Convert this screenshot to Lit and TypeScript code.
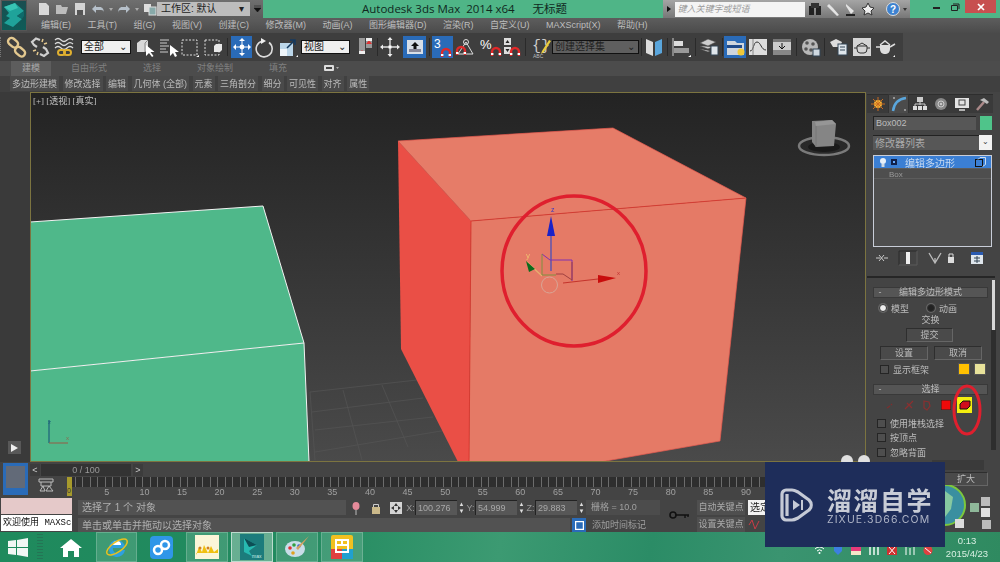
import { LitElement, css, html, svg, SVGTemplateResult } from 'lit';
import { customElement } from 'lit/decorators.js';

const box = (w: number, h: number, inner: SVGTemplateResult) =>
  html`<svg width=${w} height=${h} viewBox="0 0 ${w} ${h}">${inner}</svg>`;

const magnet = svg`<path d="M10 21v-4a4 4 0 0 1 8 0v4" fill="none" stroke="#e02828" stroke-width="2.4"/><path d="M9 19h2.4M16.6 19h2.4" stroke="#fff" stroke-width="2"/>`;

const ICONS: Record<string, SVGTemplateResult> = {
  link: svg`<g fill="none" stroke="#e3c88f" stroke-width="2.4"><rect x="3" y="3" width="11" height="7" rx="3.5" transform="rotate(40 8 6)"/><rect x="10" y="12" width="11" height="7" rx="3.5" transform="rotate(40 15 15)"/></g>`,
  unlink: svg`<g fill="none" stroke="#cfcfcf" stroke-width="2.2"><path d="M11 4 7 2.500 3 6l2 3 3 2"/><path d="M11 18l4 2 4-3-2-4-3-2"/></g><path d="M14 3l-1 3M18 7l-3 1M4 15l3-1M8 19l1-3" stroke="#e3c88f" stroke-width="1.500"/>`,
  bind: svg`<path d="M2 4q3-3 6 0t6 0 6 0M2 8q3-3 6 0t6 0 6 0M2 12q3-3 6 0t6 0 6 0" fill="none" stroke="#ddd" stroke-width="1.200"/><g fill="none" stroke="#e0b030" stroke-width="2"><rect x="5" y="14" width="7" height="5" rx="2.500"/><rect x="11" y="14" width="7" height="5" rx="2.500"/></g>`,
  selObj: svg`<path d="M3 7l4-3h7v9l-3 3H3z" fill="#d8d8d8"/><path d="M11 16V7l3-3" fill="none" stroke="#888"/><path d="M12 9v11l3-3 3 4 1.500-1-3-4h4z" fill="#fff"/>`,
  selName: svg`<path d="M3 4h9M3 7h7M3 10h9M3 13h6M3 16h8" stroke="#ccc" stroke-width="1.200"/><path d="M13 9v11l3-3 2 4 2-1-2-4h4z" fill="#fff"/>`,
  rect: svg`<rect x="3" y="4" width="15" height="15" fill="none" stroke="#ddd" stroke-dasharray="2 1.500"/><path d="M17 21l3-2v2z" fill="#fff"/>`,
  win: svg`<rect x="3" y="4" width="14" height="15" fill="none" stroke="#ddd" stroke-dasharray="2 1.500"/><path d="M12 10l2-2h6v6l-2 2h-6z" fill="#e8e8e8"/>`,
  move: svg`<g fill="#fff"><path d="M11 2l3 3h-6zM11 20l3-3H8zM2 11l3-3v6zM20 11l-3-3v6z"/><circle cx="11" cy="11" r="2.400"/></g><path d="M11 5v12M5 11h12" stroke="#fff"/>`,
  rotate: svg`<path d="M16 6.500a8 8 0 1 1-7-1.300" fill="none" stroke="#ddd" stroke-width="1.600"/><path d="M8 2l5 3-5 3z" fill="#eee"/>`,
  scale: svg`<path d="M3 7h13v13H3z" fill="#bcd7ea"/><rect x="3" y="13" width="7" height="7" fill="#eef5fa"/><path d="M10 12l7-7M13 4h5v5" fill="none" stroke="#143a60" stroke-width="1.500"/><path d="M19 21l2-2v2z" fill="#fff"/>`,
  pivot: svg`<rect x="5" y="2" width="6" height="16" fill="#999"/><rect x="12" y="2" width="6" height="10" fill="#999"/><path d="M5 18h6l-3-4zM12 8h6l-3-4z" fill="#d33"/><rect x="5" y="15" width="6" height="3" fill="#eee"/><rect x="12" y="2" width="6" height="3" fill="#eee"/>`,
  axes: svg`<path d="M11 3v16M3 11h16" stroke="#ddd" stroke-width="1.400"/><path d="M11 1l2.500 3h-5zM11 21l2.500-3h-5zM1 11l3-2.500v5zM21 11l-3-2.500v5z" fill="#eee"/><rect x="9.500" y="9.500" width="3" height="3" fill="#fff"/>`,
  manip: svg`<rect x="3" y="4" width="16" height="14" fill="#d8dfe8"/><rect x="5" y="13" width="12" height="3" fill="#889"/><path d="M11 6l4 4h-2.500v3h-3v-3H7z" fill="#111"/>`,
  snap: svg`<text x="2" y="12" fill="#fff" font-size="12" font-family="Liberation Sans">3</text>${magnet}`,
  angle: svg`<path d="M4 18l8-12 7 12z" fill="none" stroke="#ddd"/><circle cx="12" cy="6" r="2.500" fill="none" stroke="#ddd"/><g transform="translate(-7 -2)">${magnet}</g>`,
  pct: svg`<text x="0" y="13" fill="#fff" font-size="13" font-family="Liberation Sans">%</text><g transform="translate(2 -1)">${magnet}</g>`,
  spin: svg`<rect x="3" y="2" width="7" height="7" fill="#ddd"/><rect x="3" y="11" width="7" height="7" fill="#ddd"/><path d="M4.500 7l2-3 2 3zM4.500 13l2 3 2-3z" fill="#222"/><g transform="translate(0 -1)">${magnet}</g>`,
  named: svg`<text x="2" y="14" fill="#ccc" font-size="15" font-family="Liberation Mono">{}</text><path d="M12 15l7-11 2 1-7 11-3 2z" fill="#e8cc3c"/><text x="3" y="22" fill="#bbb" font-size="5" font-family="Liberation Sans">ABC</text>`,
  mirror: svg`<path d="M3 3l7 3v14l-7-3z" fill="#ddd"/><path d="M19 3l-7 3v14l7-3z" fill="#5aa6dc"/>`,
  align: svg`<path d="M3 2v18" stroke="#ccc"/><rect x="4" y="5" width="9" height="5" fill="#ddd"/><rect x="4" y="12" width="15" height="5" fill="#999"/><path d="M18 21l3-2v2z" fill="#fff"/>`,
  layer: svg`<path d="M2 7l8-4 8 3-8 4zM2 10l8 3 4-2M2 13l8 3 2-1" fill="#ccc" stroke="#444" stroke-width=".6"/><rect x="13" y="10" width="7" height="9" fill="#dfe6ec" stroke="#345"/>`,
  ribbon: svg`<path d="M3 5h8l2 2h7v12H3z" fill="#cfd6de"/><rect x="3" y="9" width="15" height="3" fill="#1f4a8a"/><circle cx="17" cy="16" r="3.500" fill="#f0c838"/>`,
  curve: svg`<rect x="2" y="3" width="18" height="16" fill="#ddd"/><path d="M3 15c4 0 3-9 7-9s4 8 9 8" fill="none" stroke="#333"/><path d="M6 3v16" stroke="#888"/>`,
  schem: svg`<rect x="2" y="3" width="18" height="16" fill="#ccc"/><rect x="2" y="3" width="18" height="3" fill="#777"/><rect x="2" y="14" width="18" height="5" fill="#888"/><path d="M11 7v5M8 10l3 3 3-3" stroke="#111" fill="none"/>`,
  mat: svg`<circle cx="10" cy="11" r="8" fill="#b8b8b8"/><g fill="#555"><circle cx="7" cy="7" r="1.800"/><circle cx="13" cy="8" r="1.800"/><circle cx="6" cy="13" r="1.800"/><circle cx="11" cy="14" r="1.800"/></g><rect x="13" y="13" width="7" height="7" fill="#cfd8e0" stroke="#345"/>`,
  rsetup: svg`<path d="M3 6l6-3 6 3-2 5H6z" fill="#ddd"/><rect x="11" y="8" width="9" height="11" fill="#dfe6ec" stroke="#345"/><path d="M13 11h5M13 14h5" stroke="#345"/>`,
  frame: svg`<rect x="2" y="2" width="18" height="18" fill="#d5d5d5"/><path d="M6 10h10v3a3 4 0 0 1-3 4H9a3 4 0 0 1-3-4z" fill="none" stroke="#333"/><path d="M6 10l5-3 5 3M16 12h3M6 12H3" fill="none" stroke="#333"/>`,
  teapot: svg`<path d="M6 9h10v4a4 5 0 0 1-4 5h-2a4 5 0 0 1-4-5z" fill="#ddd"/><path d="M6 9l5-4 5 4M16 11l5-3M6 11H2" fill="none" stroke="#ddd" stroke-width="1.500"/><path d="M19 21l2-2v2z" fill="#fff"/>`,
};

// width in px, then what sits in the slot
type Tool = [number, string, string?];
const TOOLS: Tool[] = [
  [24, 'link'], [24, 'unlink'], [24, 'bind'], [5, ''], [50, 'combo', '全部'], [2, ''],
  [24, 'selObj'], [22, 'selName'], [22, 'rect'], [23, 'win'], [7, 'sep'],
  [21, 'move', 'on'], [24, 'rotate'], [23, 'scale'], [2, ''], [49, 'combo', '视图'], [4, ''],
  [22, 'pivot'], [3, 'sep'], [22, 'axes'], [2, ''], [23, 'manip', 'on'], [6, 'sep'],
  [21, 'snap', 'on'], [1, ''], [22, 'angle'], [4, ''], [21, 'pct'], [22, 'spin'], [4, 'sep'], [3, ''], [22, 'named'],
  [87, 'combo', '创建选择集'], [4, 'sep'], [22, 'mirror'], [4, 'sep'], [24, 'align'], [4, 'sep'], [23, 'layer'], [4, 'sep'],
  [22, 'ribbon', 'on'], [1, ''], [22, 'curve'], [2, ''], [22, 'schem'], [7, 'sep'], [22, 'mat'], [5, 'sep'], [22, 'rsetup'], [2, ''], [22, 'frame'], [1, ''], [22, 'teapot'],
];

const MENUS = ['编辑(E)', '工具(T)', '组(G)', '视图(V)', '创建(C)', '修改器(M)', '动画(A)', '图形编辑器(D)', '渲染(R)', '自定义(U)', 'MAXScript(X)', '帮助(H)'];
const RIBBON_TABS = ['自由形式', '选择', '对象绘制', '填充'];
const RIBBON_SUBS = ['多边形建模', '修改选择', '编辑', '几何体 (全部)', '元素', '三角剖分', '细分', '可见性', '对齐', '属性'];
const FRAMES = Array.from({ length: 20 }, (_, i) => (i + 1) * 5);

@customElement('app-root')
export class AppRoot extends LitElement {
  static styles = css`
    :host {
      display: block;
      width: 1000px;
      height: 562px;
      overflow: hidden;
      position: relative;
      background: #444;
      font-family: 'Liberation Sans', 'Noto Sans CJK SC', sans-serif;
      font-size: 9px;
      color: #bdbdbd;
    }
    .shell { width: 1000px; height: 562px; filter: blur(0.35px); position: relative; overflow: hidden; }
    svg { display: block; flex: none; }

    .title { height: 18px; display: flex; background: #4fb587; color: #10281e; }
    .quick { width: 263px; padding-left: 37px; box-sizing: border-box; display: flex; align-items: center; background: linear-gradient(#6f6f6f, #5c5c5c); gap: 4px; }
    .workspace { width: 93px; height: 14px; margin-left: -4px; padding-left: 4px; box-sizing: border-box; background: #bdbdbd; color: #222; font-size: 10px; line-height: 14px; display: flex; justify-content: space-between; padding-right: 6px; }
    .caption { flex: 1; padding-left: 99px; font-size: 11.5px; line-height: 18px; white-space: pre; font-family: 'Open Sans', 'Noto Sans CJK SC', sans-serif; }
    .search { width: 247px; display: flex; align-items: center; background: linear-gradient(#a5a5a5, #777); gap: 3.5px; padding-left: 4px; box-sizing: border-box; }
    .search-box { width: 130px; height: 15px; background: #f4f4f4; color: #9a9a9a; line-height: 15px; padding-left: 3px; box-sizing: border-box; font-style: italic; }
    .search .gap { width: 4px; }
    .winbtns { width: 90px; display: flex; align-items: flex-start; padding-left: 17px; box-sizing: border-box; }
    .winbtn { width: 19px; height: 13px; display: flex; align-items: center; justify-content: center; }
    .close { width: 31px; background: #c75050; color: #fff; }

    .menu { height: 15px; padding-left: 41px; display: flex; gap: 16.5px; font-size: 9px; line-height: 15px; background: linear-gradient(#5d5d5d, #4b4b4b); color: #bdbdbd; white-space: nowrap; }

    .toolbar { height: 28px; display: flex; background: #4a4a4a; }
    .tools { width: 903px; box-sizing: border-box; display: flex; align-items: center; background: #3e3e3e; }
    .slot { height: 22px; flex: none; display: flex; align-items: center; justify-content: center; }
    .slot.on { background: #2a6bb8; }
    .combo { height: 14px; width: 100%; box-sizing: border-box; border: 1px solid #111; background: #efefef; color: #222; font-size: 10px; line-height: 12px; padding-left: 2px; display: flex; justify-content: space-between; padding-right: 3px; }
    .combo.dark { background: #5f5f5f; color: #222; }
    .vsep { width: 1px; height: 18px; background: #2a2a2a; }
    .grip { width: 3px; height: 20px; margin-right: 1px; border-left: 1px dotted #777; flex: none; box-sizing: border-box; }

    .rtabs { height: 15px; display: flex; background: #4c4c4c; padding-left: 11px; color: #808080; line-height: 15px; font-size: 9px; }
    .rtab { padding: 0 18px; }
    .rtab.active { background: #5d5d5d; color: #a8a8a8; padding: 0 11px; margin-right: 2px; }
    .rsubs { height: 16px; display: flex; padding-left: 10px; background: #404040; line-height: 16px; color: #bbb; }
    .rsub { padding: 0 2px; margin-right: 3.5px; white-space: nowrap; background: #4a4a4a; height: 15px; }

    .body { height: 405px; display: flex; }
    .center { width: 866px; flex: none; }
    .viewrow { height: 370px; display: flex; }
    .strip { width: 30px; flex: none; background: #3a3a3a; display: flex; align-items: flex-end; padding: 0 0 8px 8px; box-sizing: border-box; }
    .play { width: 13px; height: 13px; background: #585858; display: flex; align-items: center; justify-content: center; }
    .viewport { width: 836px; position: relative; background: linear-gradient(#232323, #4a4a4a); outline: 1px solid #7c7440; outline-offset: -1px; overflow: hidden; }
    .vlabel { position: absolute; left: 3px; top: 2px; font-size: 9px; color: #c4c4c4; font-family: 'Liberation Serif', 'Noto Sans CJK SC', serif; }

    .timeline { height: 35px; display: flex; background: #444; }
    .tl-left { width: 30px; flex: none; padding: 1px 0 0 3px; box-sizing: border-box; }
    .keybtn { width: 25px; height: 32px; background: #2a6bb8; padding: 3px; box-sizing: border-box; }
    .keybtn div { height: 22px; background: #626a78; }
    .tl-right { flex: 1; min-width: 0; }
    .slider { height: 15px; display: flex; align-items: center; }
    .arrow { width: 10px; height: 12px; background: #3c3c3c; line-height: 12px; text-align: center; color: #ccc; }
    .sliderbar { width: 90px; height: 12px; margin: 0 2px 0 1px; background: #333; text-align: center; line-height: 12px; color: #999; }
    .ruler { display: flex; height: 20px; }
    .rule-gap { width: 37px; flex: none; display: flex; justify-content: flex-end; padding-right: 13px; box-sizing: border-box; }
    .rule-main { flex: 1; min-width: 0; overflow: hidden; position: relative; }
    .ticks { height: 10px; background: repeating-linear-gradient(90deg, #6c6c6c 0 1px, #2e2e2e 1px 7.52px); }
    .nums { display: flex; padding-left: 21px; height: 10px; line-height: 10px; color: #a0a0a0; }
    .nums span { width: 37.6px; flex: none; text-align: center; }
    .marker { position: absolute; left: 0; top: 0; width: 5px; height: 19px; background: #a79a2c; color: #333; font-size: 7px; line-height: 28px; }

    .panel { width: 134px; flex: none; box-sizing: border-box; position: relative; background: #444; padding-left: 1px; }
    .ptabs { display: flex; margin-top: 2px; height: 19px; }
    .ptab { width: 21px; background: #3a3a3a; display: flex; align-items: center; justify-content: center; box-sizing: border-box; border-top: 1px solid #2e2e2e; }
    .ptab.active { background: #4b4b4b; border: 1px solid #333; border-bottom: none; }
    .pbody { padding-left: 6px; width: 119px; }
    .namerow { display: flex; margin-top: 3px; height: 14px; gap: 4px; }
    .nameinput { width: 106px; background: #575757; box-sizing: border-box; padding-left: 2px; border-top: 1px solid #222; border-left: 1px solid #222; line-height: 13px; }
    .swatch { width: 12px; background: #4fc48a; }
    .modrow { display: flex; margin-top: 5px; height: 15px; width: 119px; }
    .modinput { flex: 1; background: #575757; border-top: 1px solid #222; line-height: 15px; font-size: 10px; padding-left: 2px; color: #aaa; }
    .moddrop { width: 13px; background: #f2f2f2; color: #444; text-align: center; line-height: 14px; font-size: 8px; }
    .stack { margin-top: 5px; height: 92px; width: 119px; box-sizing: border-box; border: 1px solid #c8cdd8; background: #4e4e4e; }
    .stack-on { height: 12px; background: #3b7fd4; display: flex; align-items: center; gap: 4px; padding-left: 5px; color: #c8daf0; font-size: 10px; }
    .stack-on .sp { flex: 1; }
    .stack-on .end { width: 1px; }
    .stack-on .name { margin-left: 4px; }
    .stack-box { height: 11px; padding-left: 15px; line-height: 11px; color: #9a9a9a; border-bottom: 1px solid #5c5c5c; border-top: 1px solid #5c5c5c; font-size: 8px; box-sizing: border-box; }
    .stackbtns { margin-top: 3px; height: 16px; display: grid; grid-template-columns: 23px 29px 19px 24px 14px; align-items: center; padding-left: 2px; }
    .divider { margin-top: 10px; height: 2px; background: #262626; width: 128px; margin-left: -6px; }
    .rhead { margin-top: 9px; height: 11px; width: 115px; box-sizing: border-box; background: #555; border: 1px solid #393939; line-height: 9px; display: flex; color: #bbb; }
    .rhead b { width: 12px; text-align: center; font-weight: normal; }
    .rhead span { flex: 1; text-align: center; padding-right: 12px; }
    .radios { margin-top: 5px; height: 10px; display: flex; gap: 18px; padding-left: 6px; }
    .radio { display: flex; align-items: center; gap: 4px; }
    .dot { width: 6px; height: 6px; border-radius: 50%; background: #222; border: 1px solid #333; box-shadow: 0 0 0 1px #666; }
    .dot.on { background: #eee; }
    .center-text { margin-top: 2px; height: 10px; text-align: center; width: 115px; line-height: 10px; font-size: 9px; }
    .btn { height: 14px; box-sizing: border-box; border-top: 1px solid #2e2e2e; border-left: 1px solid #2e2e2e; border-bottom: 1px solid #666; border-right: 1px solid #666; background: #4a4a4a; text-align: center; line-height: 12px; }
    .commit { width: 47px; margin: 3px 0 0 33px; }
    .twobtn { display: flex; margin-top: 4px; gap: 6px; padding-left: 7px; }
    .twobtn .btn { width: 48px; }
    .framerow { display: flex; margin-top: 3px; height: 12px; align-items: center; padding-left: 7px; }
    .framerow .sp { flex: 1; }
    .check { width: 7px; height: 7px; background: #4e4e4e; border: 1px solid #252525; margin-right: 4px; flex: none; }
    .c1 { width: 12px; height: 12px; background: #ffc000; border: 1px solid #555; box-sizing: border-box; margin-left: 4px; }
    .c2 { width: 12px; height: 12px; background: #e8e29a; border: 1px solid #555; box-sizing: border-box; margin: 0 6px 0 4px; }
    .levels { margin-top: 2px; height: 16px; display: flex; align-items: center; padding-left: 12px; gap: 6px; }
    .levels .red { margin-left: 2px; }
    .checks { display: flex; flex-direction: column; gap: 2.5px; margin-top: 4px; padding-left: 4px; }
    .checks div { height: 12px; display: flex; align-items: center; }
    .spinrow { margin-top: 2px; height: 10px; display: flex; justify-content: flex-end; padding-right: 8px; }
    .spinfield { width: 52px; background: #3a3a3a; }
    .grow { margin: 2px 0 0 71px; width: 44px; }
    .scroll { position: absolute; right: 5px; top: 188px; width: 3px; height: 50px; background: #d8d8d8; }
    .scrolltrack { position: absolute; right: 4px; top: 238px; width: 5px; height: 120px; background: #2e2e2e; }

    .status { height: 35px; display: flex; background: #444; }
    .msg { width: 72px; flex: none; padding: 1px 0 0 1px; box-sizing: border-box; }
    .msg-top { height: 16px; background: #e5c9c9; }
    .msg-bot { height: 16px; margin-top: 1px; background: #fff; color: #111; font: 9px 'Liberation Mono', 'Noto Sans CJK SC', monospace; line-height: 16px; white-space: nowrap; padding-left: 2px; }
    .stat-main { width: 584px; margin-left: 6px; flex: none; }
    .stat-row { display: flex; align-items: center; height: 15px; margin-top: 3px; }
    .stat-row + .stat-row { margin-top: 3px; height: 14px; }
    .field { background: #525252; height: 100%; box-sizing: border-box; padding-left: 4px; line-height: 15px; font-size: 10px; color: #b0b0b0; }
    .f1 { width: 268px; }
    .f2 { width: 492px; }
    .ico { width: 20px; display: flex; justify-content: center; flex: none; }
    .xyz { width: 9px; color: #9a9a9a; flex: none; text-align: center; }
    .coord { width: 42px; height: 15px; flex: none; background: #575757; border-left: 1px solid #222; border-top: 1px solid #222; box-sizing: border-box; line-height: 14px; padding-left: 2px; color: #a8a8a8; }
    .updown { width: 9px; color: #ddd; flex: none; text-align: center; font-size: 6px; line-height: 7px; }
    .gridlbl { width: 74px; height: 15px; flex: none; background: #4c4c4c; padding-left: 5px; box-sizing: border-box; line-height: 15px; color: #a0a0a0; }
    .mark { height: 14px; width: 74px; line-height: 14px; padding-left: 4px; box-sizing: border-box; color: #a0a0a0; flex: none; margin-left: 2px; }
    .markbtn { width: 14px; height: 14px; background: #2a6bb8; margin-left: 2px; flex: none; display: flex; justify-content: center; align-items: center; }
    .key { width: 35px; flex: none; display: flex; align-items: center; justify-content: center; }
    .autokey { width: 48px; flex: none; padding-top: 3px; }
    .autokey div { height: 15px; line-height: 15px; text-align: center; background: #4f4f4f; color: #aaa; margin-bottom: 2px; }
    .sel { padding: 3px 0 0 3px; }
    .sel div { width: 30px; height: 15px; background: #f2f2f2; color: #222; font-size: 10px; line-height: 15px; margin-bottom: 3px; padding-left: 2px; box-sizing: border-box; }

    .taskbar { height: 30px; display: flex; align-items: center; background: linear-gradient(100deg, #1f8a5d 0%, #228a5f 30%, #3c9a72 50%, #2b8c66 65%, #3a9470 78%, #2f8a60 100%); color: #d8efe2; }
    .winlogo { width: 37px; padding-left: 8px; flex: none; box-sizing: border-box; }
    .tgrip { width: 6px; height: 26px; margin-right: 10px; flex: none; background: repeating-linear-gradient(#247555 0 1px, transparent 1px 3px); }
    .task { height: 30px; display: flex; align-items: center; justify-content: center; flex: none; box-sizing: border-box; }
    .task.run { background: rgba(255,255,255,.14); border: 1px solid rgba(255,255,255,.2); }
    .task.cur { background: rgba(255,255,255,.32); border: 1px solid rgba(255,255,255,.55); }
    .tray { margin-left: auto; display: flex; gap: 8px; padding-top: 6px; align-self: center; }
    .clock { width: 52px; text-align: center; font-size: 9.500px; line-height: 13px; margin: 0 7px 0 8px; flex: none; }

    .logo { position: absolute; left: 1px; top: 0; width: 26px; height: 31px; background: linear-gradient(#1a4e50, #0e5c58); border: 1px solid #555; box-sizing: border-box; }
    .annot { position: absolute; left: 0; top: 0; pointer-events: none; }
    .nav { position: absolute; left: 925px; top: 485px; }
    .mark-wm { position: absolute; left: 765px; top: 462px; width: 180px; height: 85px; background: #1e2d5a; display: flex; align-items: center; padding-left: 15px; box-sizing: border-box; gap: 13px; color: #c8ccd6; }
    .wm-cn { font-size: 25px; font-weight: 700; letter-spacing: 1.500px; line-height: 30px; white-space: nowrap; font-family: 'Noto Sans CJK SC', sans-serif; }
    .wm-en { font-size: 10.500px; letter-spacing: 1.100px; line-height: 12px; white-space: nowrap; font-family: 'Inter', sans-serif; color: #aeb4c6; }
  `;

  private renderTool(t: Tool) {
    const [w, id, arg] = t;
    let inner: unknown = '';
    if (id === 'combo') {
      inner = html`<div class="combo ${arg === '创建选择集' ? 'dark' : ''}"><span>${arg}</span><span>⌄</span></div>`;
    } else if (id === 'sep') {
      inner = html`<div class="vsep"></div>`;
    } else if (id) {
      inner = box(22, 22, ICONS[id]);
    }
    return html`<div class="slot ${arg === 'on' ? 'on' : ''}" style="width:${w}px">${inner}</div>`;
  }

  private renderViewport() {
    const floorLines = [
      'M310 392L417 380', 'M312 412L423 398', 'M315 430L433 417', 'M315 452L447 430',
      'M343 390L362 460', 'M382 385L408 447', 'M310 392L315 460',
    ];
    return html`<svg width="836" height="370" viewBox="30 92 836 370">
      <g stroke="#545454" stroke-width=".7" fill="none">
        ${floorLines.map((d) => svg`<path d=${d}/>`)}
      </g>

      <path d="M30 222L263 206L304 343L30 371z" fill="#4fb88a"/>
      <path d="M30 371L304 343L309 462H30z" fill="#4fb88a"/>
      <path d="M30 222L263 206L304 343L309 462M30 371L304 343" fill="none" stroke="#f2f2f2" stroke-width="1"/>
      <g stroke="#1d5f7a" fill="none" stroke-width="1.200">
        <path d="M49 443V420"/><path d="M49 443H68" stroke="#8a6a50"/>
      </g>
      <text x="48" y="424" font-size="6" fill="#1d5f7a" font-family="Liberation Sans">z</text>
      <text x="66" y="440" font-size="6" fill="#8a6a50" font-family="Liberation Sans">x</text>

      <path d="M398 141L471 221L469 462H458L401 349z" fill="#ea4f46"/>
      <path d="M398 141L613 128L746 198L471 221z" fill="#e67c68"/>
      <path d="M471 221L746 198L720 441L600 462H469z" fill="#e57a66"/>
      <path d="M471 221L746 198M471 221L469 462" fill="none" stroke="#d8382f" stroke-width=".9"/>
      <path d="M398 141L613 128L746 198L720 441L600 462M398 141L471 221" fill="none" stroke="#e65a50" stroke-width=".7"/>

      <circle cx="549.500" cy="285" r="8" fill="none" stroke="#d9a595" stroke-width="1"/>
      <path d="M551 271V235" stroke="#3b4cc0" stroke-width="1.200"/>
      <path d="M551 216L555 236H547z" fill="#1a22c8"/>
      <path d="M542 276L527 262" stroke="#e8b070" stroke-width="1.200"/>
      <path d="M526 261L535 269L529 272z" fill="#0c6a1e"/>
      <path d="M563 283L598 279" stroke="#c4342c" stroke-width="1.200"/>
      <path d="M616 278L598 275V283z" fill="#c80c0c"/>
      <path d="M542 254L550 260H572V281" fill="none" stroke="#8030b0" stroke-width="1"/>
      <path d="M572 262V280L563 274H556" fill="none" stroke="#a04040" stroke-width="1"/>
      <path d="M542 254V275H556" fill="none" stroke="#7e9040" stroke-width="1"/>
      <text x="551" y="212" font-size="7" fill="#3b3bc0" font-family="Liberation Sans">z</text>
      <text x="526" y="258" font-size="8" fill="#f0c070" font-family="Liberation Sans">y</text>
      <text x="617" y="275" font-size="6" fill="#c03030" font-family="Liberation Sans">x</text>

      <ellipse cx="824" cy="146" rx="25" ry="9" fill="none" stroke="#7a7a7a" stroke-width="2.500"/>
      <ellipse cx="824" cy="147" rx="16" ry="5" fill="#1a1a1a"/>
      <path d="M812 121L832 120L836 124L834 146L816 147L812 142z" fill="#858585"/>
      <path d="M815 122L832 120L836 124L816 126z" fill="#969696"/>
      <path d="M816 126V147" stroke="#777"/>
    </svg>`;
  }

  private renderPanel() {
    return html`<div class="panel">
      <div class="ptabs">
        <div class="ptab">${box(16, 16, svg`<circle cx="8" cy="8" r="4" fill="#f5b838"/><path d="M8 1v14M1 8h14M3 3l10 10M13 3L3 13" stroke="#c86a20"/>`)}</div>
        <div class="ptab active">${box(16, 16, svg`<path d="M2 15C3 7 7 3 15 2" fill="none" stroke="#5aa6dc" stroke-width="2.500"/><path d="M2 2h2M13 14h2" stroke="#ddd"/>`)}</div>
        <div class="ptab">${box(16, 16, svg`<rect x="5" y="1" width="6" height="5" fill="#ccc"/><path d="M8 6v3M3 10V8h10v2" stroke="#ccc" fill="none"/><rect x="1" y="10" width="4" height="4" fill="#ddd"/><rect x="6" y="10" width="4" height="4" fill="#ddd"/><rect x="11" y="10" width="4" height="4" fill="#ddd"/>`)}</div>
        <div class="ptab">${box(16, 16, svg`<circle cx="8" cy="8" r="6" fill="#888"/><circle cx="8" cy="8" r="3" fill="none" stroke="#ccc"/><circle cx="8" cy="8" r="1" fill="#ddd"/>`)}</div>
        <div class="ptab">${box(16, 16, svg`<rect x="1" y="2" width="14" height="10" fill="#e4e4e4"/><rect x="5" y="4" width="6" height="5" fill="none" stroke="#444"/><path d="M5 14h6" stroke="#ddd" stroke-width="1.500"/>`)}</div>
        <div class="ptab">${box(16, 16, svg`<path d="M2 14L9 6" stroke="#a88" stroke-width="2.500"/><path d="M5 4l4-2 5 4-2 2-3-2z" fill="#bbb"/>`)}</div>
      </div>
      <div class="pbody">
        <div class="namerow"><div class="nameinput">Box002</div><div class="swatch"></div></div>
        <div class="modrow"><div class="modinput">修改器列表</div><div class="moddrop">⌄</div></div>
        <div class="stack">
          <div class="stack-on">
            ${box(8, 11, svg`<circle cx="4" cy="4" r="3" fill="#e8f0f8"/><rect x="2.500" y="7" width="3" height="3" fill="#d0d8e0"/>`)}
            ${box(6, 6, svg`<rect width="6" height="6" fill="#10204a"/><rect x="2" y="2" width="2" height="2" fill="#6af"/>`)}
            <span class="name">编辑多边形</span><span class="sp"></span>
            ${box(11, 10, svg`<rect x=".5" y="2.500" width="7" height="7" fill="none" stroke="#111"/><path d="M3 2.500L5 .5h5.500v7L7.500 9.500" fill="none" stroke="#cde"/>`)}
            <span class="end"></span>
          </div>
          <div class="stack-box">Box</div>
        </div>
        <div class="stackbtns">
          ${box(14, 12, svg`<path d="M1 6h4M9 6h4M4 3l5 6M9 3L4 9" stroke="#ccc"/>`)}
          ${box(20, 16, svg`<path d="M1 15V1h18" fill="none" stroke="#2a2a2a"/><path d="M19 1v14H1" fill="none" stroke="#5a5a5a"/><rect x="8" y="2" width="4" height="12" fill="#eee"/>`)}
          ${box(16, 14, svg`<path d="M2 2l6 10 6-10M8 12V7" fill="none" stroke="#bbb" stroke-width="1.300"/>`)}
          ${box(10, 14, svg`<rect x="2" y="6" width="6" height="6" fill="#ddd"/><path d="M3 6V3h4v3" fill="none" stroke="#ddd"/>`)}
          ${box(14, 14, svg`<rect x="1" y="1" width="12" height="12" fill="#dfe6ec"/><rect x="1" y="1" width="12" height="3" fill="#2a5ab0"/><path d="M4 7h6M4 10h6M7 5v7" stroke="#345"/>`)}
        </div>
        <div class="divider"></div>

        <div class="rhead"><b>-</b><span>编辑多边形模式</span></div>
        <div class="radios">
          <div class="radio"><i class="dot on"></i>模型</div>
          <div class="radio"><i class="dot"></i>动画</div>
        </div>
        <div class="center-text">交换</div>
        <div class="btn commit">提交</div>
        <div class="twobtn"><div class="btn">设置</div><div class="btn">取消</div></div>
        <div class="framerow"><i class="check"></i>显示框架<span class="sp"></span><i class="c1"></i><i class="c2"></i></div>

        <div class="rhead"><b>-</b><span>选择</span></div>
        <div class="levels">
          ${box(12, 12, svg`<path d="M2 9l3-2M6 5l1 1" stroke="#7e2e2e" stroke-width="1.300"/>`)}
          ${box(12, 12, svg`<path d="M2 10l8-8M4 4l5 5" stroke="#8a3030" stroke-width="1.300"/>`)}
          ${box(12, 12, svg`<path d="M3 2l5 1 1 4-3 4-3-2z" fill="none" stroke="#8a3030" stroke-width="1.200"/>`)}
          <div class="red">${box(10, 10, svg`<rect width="10" height="10" fill="#ee0a0a" stroke="#222"/>`)}</div>
          ${box(15, 16, svg`<rect width="15" height="16" fill="#f4ee10"/><path d="M3 7l3-3h7v5l-3 3H3z" fill="#d00c1c" stroke="#111"/>`)}
        </div>
        <div class="checks">
          <div><i class="check"></i>使用堆栈选择</div>
          <div><i class="check"></i>按顶点</div>
          <div><i class="check"></i>忽略背面</div>
        </div>
        <div class="spinrow"><div class="spinfield"></div></div>
        <div class="btn grow">扩大</div>
      </div>
      <div class="scroll"></div>
      <div class="scrolltrack"></div>
    </div>`;
  }

  private renderStatus() {
    const coords: [string, string][] = [['X:', '100.276'], ['Y:', '54.999'], ['Z:', '29.883']];
    return html`<div class="status">
      <div class="msg"><div class="msg-top"></div><div class="msg-bot">欢迎使用 MAXSc</div></div>
      <div class="stat-main">
        <div class="stat-row">
          <div class="field f1">选择了 1 个 对象</div>
          <div class="ico">${box(10, 14, svg`<ellipse cx="5" cy="5" rx="3.500" ry="4" fill="#e58a9a"/><path d="M5 9v5" stroke="#bbb"/>`)}</div>
          <div class="ico">${box(10, 12, svg`<rect x="1" y="5" width="8" height="7" fill="#cbb98a"/><path d="M2.500 5V2.500h5V5" fill="none" stroke="#ccc"/>`)}</div>
          <div class="ico">${box(12, 12, svg`<rect width="12" height="12" fill="#d4d4d4"/><path d="M6 1l2 3H4zM6 11l2-3H4zM1 6l3-2v4zM11 6L8 4v4z" fill="#333"/>`)}</div>
          ${coords.map(([l, v]) => html`<span class="xyz">${l}</span><div class="coord">${v}</div><div class="updown">▲<br />▼</div>`)}
          <div class="gridlbl">栅格 = 10.0</div>
        </div>
        <div class="stat-row">
          <div class="field f2">单击或单击并拖动以选择对象</div>
          <div class="markbtn">${box(9, 9, svg`<rect x=".5" y=".5" width="8" height="8" fill="none" stroke="#fff" stroke-width="1.500"/>`)}</div>
          <div class="mark">添加时间标记</div>
        </div>
      </div>
      <div class="key">${box(22, 10, svg`<circle cx="4" cy="5" r="3" fill="none" stroke="#111" stroke-width="1.600"/><path d="M7 5h13M16 5v3M19 5v2" stroke="#111" stroke-width="1.400"/>`)}</div>
      <div class="autokey"><div>自动关键点</div><div>设置关键点</div></div>
      <div class="sel"><div>选定</div>${box(14, 13, svg`<path d="M1 7l3-5 3 9 4-8" fill="none" stroke="#c83c46"/>`)}</div>
    </div>`;
  }

  private renderTaskbar() {
    return html`<div class="taskbar">
      <div class="winlogo">${box(20, 19, svg`<path d="M0 3l8-1v7H0zM9 2l11-2v9H9zM0 10h8v7l-8-1zM9 10h11v9L9 17z" fill="#f2f7f4"/>`)}</div>
      <div class="tgrip"></div>
      <div class="task" style="width:36px">${box(22, 19, svg`<path d="M0 10L11 1l11 9h-3v9h-5v-6H8v6H3v-9z" fill="#fff"/>`)}</div>
      <div style="width:7px"></div>
      <div class="task run" style="width:41px">${box(24, 24, svg`<path d="M4 13a8 8 0 1 1 16 0H8a4 4 0 0 0 8 2h4a8 8 0 0 1-16-2z" fill="#2ea0e0"/><path d="M8 10h8a4 4 0 0 0-8 0z" fill="#fff"/><ellipse cx="12" cy="12" rx="12" ry="5" transform="rotate(-35 12 12)" fill="none" stroke="#e8c020" stroke-width="1.500"/>`)}</div>
      <div style="width:11px"></div>
      <div class="task" style="width:26px">${box(23, 23, svg`<rect width="23" height="23" rx="4" fill="#2f96e8"/><circle cx="8" cy="14" r="4" fill="none" stroke="#fff" stroke-width="2.500"/><circle cx="15" cy="9" r="4" fill="none" stroke="#fff" stroke-width="2.500"/>`)}</div>
      <div style="width:12px"></div>
      <div class="task run" style="width:42px">${box(24, 24, svg`<rect width="24" height="24" fill="#fbf6d8"/><path d="M1 20l3-8 3 5 2-7 4 8 3-7 3 6 4-3v4H1z" fill="#f0c010"/><circle cx="5" cy="13" r="1.500" fill="#d08020"/><circle cx="13" cy="13" r="1.500" fill="#d08020"/>`)}</div>
      <div style="width:3px"></div>
      <div class="task cur" style="width:42px">${box(24, 26, svg`<rect width="24" height="26" fill="#1c7c7c"/><path d="M4 4l13 7-8 6 3 5-8-4z" fill="#27b9b0"/><path d="M4 4l13 7-8 2z" fill="#0d4e55"/><text x="12" y="24" font-size="5" fill="#c8eee8" font-family="Liberation Sans">max</text>`)}</div>
      <div style="width:3px"></div>
      <div class="task run" style="width:42px">${box(26, 24, svg`<ellipse cx="11" cy="14" rx="10" ry="8" fill="#c9dde8"/><circle cx="6" cy="13" r="1.800" fill="#e03030"/><circle cx="10" cy="10" r="1.800" fill="#30a040"/><circle cx="15" cy="11" r="1.800" fill="#3060d0"/><circle cx="9" cy="18" r="1.800" fill="#e0a020"/><path d="M25 1L14 15l-2-2z" fill="#d4a060"/>`)}</div>
      <div style="width:3px"></div>
      <div class="task run" style="width:42px">${box(22, 24, svg`<rect width="22" height="24" rx="2" fill="#f0c020"/><rect y="14" width="11" height="10" fill="#e04040"/><rect x="11" y="14" width="11" height="10" fill="#20a0d0"/><path d="M5 5h12v12H5zM5 10h12M11 5v6" fill="none" stroke="#fff" stroke-width="2"/>`)}</div>
      <div class="tray">
        ${box(11, 8, svg`<path d="M1 3a6 6 0 0 1 9 0M3 5a3.500 3.500 0 0 1 5 0" fill="none" stroke="#fff"/><circle cx="5.500" cy="7" r="1" fill="#fff"/>`)}
        ${box(10, 9, svg`<path d="M1 0h8v5l-4 4-4-4z" fill="#3c7fe0"/>`)}
        ${box(10, 9, svg`<rect width="10" height="9" fill="#e83a7a"/><rect y="5" width="10" height="4" fill="#f4e6c8"/>`)}
        ${box(10, 9, svg`<path d="M1 0v9M5 0v9M9 0v9" stroke="#fff" stroke-width="1.400"/>`)}
        ${box(10, 9, svg`<rect width="10" height="9" fill="#d03030"/><path d="M2 1l6 7M8 1L2 8" stroke="#fff"/>`)}
        ${box(10, 9, svg`<path d="M1 0v9M5 2v7M9 0v9" stroke="#fff"/>`)}
        ${box(10, 9, svg`<circle cx="5" cy="4.500" r="4.500" fill="#e04040"/><path d="M2 2l6 5" stroke="#fff"/>`)}
      </div>
      <div class="clock">0:13<br />2015/4/23</div>
    </div>`;
  }

  render() {
    return html`<div class="shell">
      <div class="title">
        <div class="quick">
          ${box(14, 14, svg`<path d="M2 1h7l3 3v9H2z" fill="#d8d8d8"/>`)}
          ${box(14, 14, svg`<path d="M1 3h5l1 2h6l-2 7H1z" fill="#bcbcbc"/>`)}
          ${box(14, 14, svg`<rect x="2" y="1" width="10" height="12" fill="#d4d4d4"/><rect x="4" y="8" width="6" height="5" fill="#555"/>`)}
          ${box(14, 14, svg`<path d="M5 3L1 7l4 4V8h5c2 0 3 1 3 3 0-4-2-6-4-6H5z" fill="#b6c0ca"/>`)}
          ${box(4, 14, svg`<path d="M0 6h4L2 9z" fill="#aaa"/>`)}
          ${box(14, 14, svg`<path d="M9 3l4 4-4 4V8H4c-2 0-3 1-3 3 0-4 2-6 4-6h4z" fill="#b6c0ca"/>`)}
          ${box(4, 14, svg`<path d="M0 6h4L2 9z" fill="#aaa"/>`)}
          ${box(14, 14, svg`<rect x="1" y="2" width="7" height="8" fill="#ddd"/><rect x="6" y="5" width="7" height="8" fill="#8aa" stroke="#ddd"/>`)}
          <div class="workspace"><span>工作区: 默认</span><span>▾</span></div>
          ${box(7, 14, svg`<path d="M0 4h7M0 6h7L3.500 10z" fill="#111" stroke="#111" stroke-width=".5"/>`)}
        </div>
        <div class="caption">Autodesk 3ds Max  2014 x64      无标题</div>
        <div class="search">
          ${box(4, 14, svg`<path d="M0 4l4 3-4 3z" fill="#111"/>`)}
          <div class="search-box">键入关键字或短语</div>
          ${box(14, 14, svg`<rect x="1" y="4" width="5" height="9" fill="#222"/><rect x="8" y="4" width="5" height="9" fill="#222"/><rect x="3" y="1" width="8" height="5" fill="#333"/>`)}
          ${box(14, 14, svg`<path d="M3 2l4 4 6 7-2 1L5 8 1 4z" fill="#e4e4e4"/>`)}
          ${box(14, 14, svg`<path d="M3 2l8 7-3 3-5-8z" fill="#e4e4e4"/><path d="M3 13h9" stroke="#222" stroke-width="2"/>`)}
          ${box(14, 14, svg`<path d="M7 1l2 4 4 1-3 3 1 4-4-2-4 2 1-4-3-3 4-1z" fill="#eee" stroke="#333"/>`)}
          <span class="gap"></span>
          ${box(14, 14, svg`<circle cx="7" cy="7" r="6.500" fill="#3d82d0" stroke="#ddd"/><text x="4" y="11" font-size="10" font-weight="bold" fill="#fff" font-family="Liberation Sans">?</text>`)}
          ${box(4, 14, svg`<path d="M0 6h4L2 9z" fill="#333"/>`)}
        </div>
        <div class="winbtns">
          <div class="winbtn">${box(9, 6, svg`<path d="M1 4h7" stroke="#222" stroke-width="2"/>`)}</div>
          <div class="winbtn">${box(9, 9, svg`<path d="M2 2h6v5M.5 3.500h6v5h-6z" fill="none" stroke="#222"/>`)}</div>
          <div class="winbtn close">${box(8, 8, svg`<path d="M1 1l6 6M7 1L1 7" stroke="#fff" stroke-width="1.700"/>`)}</div>
        </div>
      </div>
      <div class="menu">${MENUS.map((m) => html`<span>${m}</span>`)}</div>
      <div class="toolbar">
        <div class="tools"><i class="grip"></i>${TOOLS.map((t) => this.renderTool(t))}</div>
      </div>
      <div class="rtabs">
        <div class="rtab active">建模</div>
        ${RIBBON_TABS.map((t) => html`<div class="rtab">${t}</div>`)}
        <div class="rtab">${box(16, 15, svg`<rect x="1" y="4" width="10" height="6" rx="1" fill="#ddd"/><rect x="3" y="6" width="6" height="2" fill="#444"/><path d="M13 6h3l-1.500 2z" fill="#aaa"/>`)}</div>
      </div>
      <div class="rsubs">${RIBBON_SUBS.map((s) => html`<div class="rsub">${s}</div>`)}</div>

      <div class="body">
        <div class="center">
          <div class="viewrow">
            <div class="strip"><div class="play">${box(7, 8, svg`<path d="M0 0l7 4-7 4z" fill="#eee"/>`)}</div></div>
            <div class="viewport">
              ${this.renderViewport()}
              <div class="vlabel">[+] [透视] [真实]</div>
            </div>
          </div>
          <div class="timeline">
            <div class="tl-left"><div class="keybtn"><div></div></div></div>
            <div class="tl-right">
              <div class="slider"><div class="arrow">&lt;</div><div class="sliderbar">0 / 100</div><div class="arrow">&gt;</div></div>
              <div class="ruler">
                <div class="rule-gap">${box(16, 16, svg`<path d="M1 2h14v3H1zM3 5v4h10V5M5 9l-3 5h5zM11 9l-3 5h7z" fill="none" stroke="#bbb"/>`)}</div>
                <div class="rule-main">
                  <div class="ticks"></div>
                  <div class="nums">${FRAMES.map((n) => html`<span>${n}</span>`)}</div>
                  <div class="marker">0</div>
                </div>
              </div>
            </div>
          </div>
        </div>
        ${this.renderPanel()}
      </div>

      ${this.renderStatus()}
      ${this.renderTaskbar()}

      <div class="logo">${box(24, 29, svg`<path d="M2 6l11-4 9 8-7 5 5 3-9 8-9-4 6-5-4-2 3-3z" fill="#1fa39a"/><path d="M2 6l11-4 3 5-8 3z" fill="#38c4b4"/><path d="M22 10l-7 5 5 3 2-3z" fill="#0e6a6a"/>`)}</div>
      <svg class="annot" width="1000" height="562" viewBox="0 0 1000 562">
        <ellipse cx="574" cy="271" rx="72" ry="75" fill="none" stroke="#df1f2e" stroke-width="3.500"/>
        <ellipse cx="967" cy="410" rx="13" ry="24" fill="none" stroke="#df1f2e" stroke-width="3"/>
        <circle cx="847" cy="461" r="6" fill="#e0e0e0"/>
        <circle cx="864" cy="461" r="6" fill="#e0e0e0"/>
      </svg>
      <div class="nav">${box(70, 47, svg`
        <circle cx="20" cy="20" r="20" fill="#3a8fa0" stroke="#7cc83c" stroke-width="2"/>
        <path d="M20 6l8 6-2 12-6 8z" fill="#86c8a0"/>
        <rect x="45" y="18" width="9" height="9" fill="#8fb89a"/><rect x="56" y="12" width="9" height="9" fill="#bcbcbc"/><rect x="56" y="23" width="9" height="9" fill="#e0e0e0"/>
        <rect x="30" y="34" width="9" height="9" fill="#dcdcdc"/><rect x="57" y="35" width="9" height="9" fill="#bbb"/>
      `)}</div>
      <div class="mark-wm">
        ${box(34, 36, svg`<path d="M6 3h6c2 0 4 1 6 2l11 8c3 3 3 7 0 10L18 31c-2 1-4 2-6 2H6c-2 0-4-2-4-4V7c0-2 2-4 4-4zM7 7v22" fill="none" stroke="#c5cad6" stroke-width="3.200" stroke-linejoin="round"/><path d="M13 13l7 5-7 5z" fill="#c5cad6"/><path d="M22 13v10" stroke="#c5cad6" stroke-width="2"/>`)}
        <div>
          <div class="wm-cn">溜溜自学</div>
          <div class="wm-en">ZIXUE.3D66.COM</div>
        </div>
      </div>
    </div>`;
  }
}
